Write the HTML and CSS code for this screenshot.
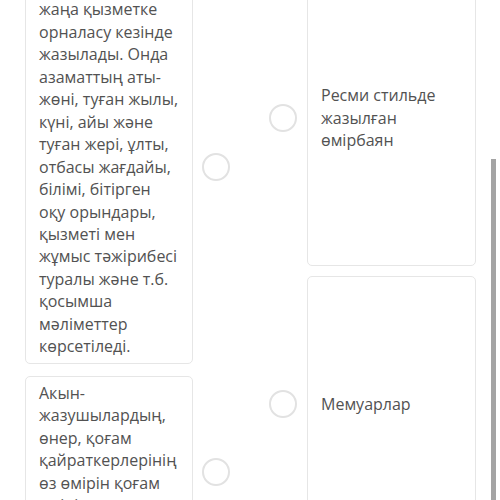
FILE: index.html
```html
<!DOCTYPE html>
<html lang="kk">
<head>
    <meta charset="UTF-8">
    <meta name="viewport" content="width=device-width, initial-scale=1.0">
    <title>Сәйкестендіру</title>
    <link rel="stylesheet" href="styles.css">
</head>
<body>
    <div class="board">
        <div class="column column-left">
            <div class="item">
                <div class="card">Оқуға түсу,<br>жаңа қызметке орналасу кезінде жазылады. Онда азаматтың аты-жөні, туған жылы, күні, айы және туған жері, ұлты, отбасы жағдайы, білімі, бітірген оқу орындары, қызметі мен жұмыс тәжірибесі туралы және т.б. қосымша мәліметтер көрсетіледі.</div>
                <span class="radio"></span>
            </div>
            <div class="item">
                <div class="card">Акын-жазушылардың, өнер, қоғам қайраткерлерінің өз өмірін қоғам өмірімен байланыстыра отырып жазуы</div>
                <span class="radio"></span>
            </div>
        </div>
        <div class="column column-right">
            <div class="item">
                <span class="radio"></span>
                <div class="card card-tall">Ресми стильде жазылған өмірбаян</div>
            </div>
            <div class="item">
                <span class="radio"></span>
                <div class="card card-mid">Мемуарлар</div>
            </div>
        </div>
    </div>
    <div class="scroll-thumb"></div>
</body>
</html>
```

FILE: styles.css
```css
*{
    margin:0;
    padding:0;
    box-sizing:border-box;
}
html,body{
    overflow:hidden;
    height:100%;
    background:#fff;
}
body{
    font-family:"Open Sans","Noto Sans",sans-serif;
    font-size:16px;
    line-height:22.45px;
    color:#525252;
}

/* two lists side by side, page is scrolled down a bit */
.board{
    display:grid;
    grid-template-columns:205px 207px;
    column-gap:39px;
    align-items:start;
    padding:0 24px 0 25px;
    margin-top:-30px;
}
.column{
    display:flex;
    flex-direction:column;
}
.column-left{
    gap:12px;
}
.column-right{
    gap:10px;
}

.item{
    display:flex;
    align-items:center;
}
.column-left .item{
    gap:9px;
}
.column-right .item{
    gap:10px;
}

.card{
    flex:1;
    border:1px solid #e6e6e6;
    border-radius:5px;
    padding:5px 13px;
    background:#fff;
}
.column-left .card{
    width:168px;
    flex:none;
}
.card-tall,
.card-mid{
    display:flex;
    align-items:center;
}
.card-tall{
    height:296px;
}
.card-mid{
    height:256px;
}

.radio{
    flex:none;
    width:28px;
    height:28px;
    border:2px solid #e2e2e2;
    border-radius:50%;
    background:#fff;
}

.scroll-thumb{
    position:fixed;
    left:491px;
    top:159px;
    width:5px;
    height:341px;
    background:#a4a4a4;
}
```
